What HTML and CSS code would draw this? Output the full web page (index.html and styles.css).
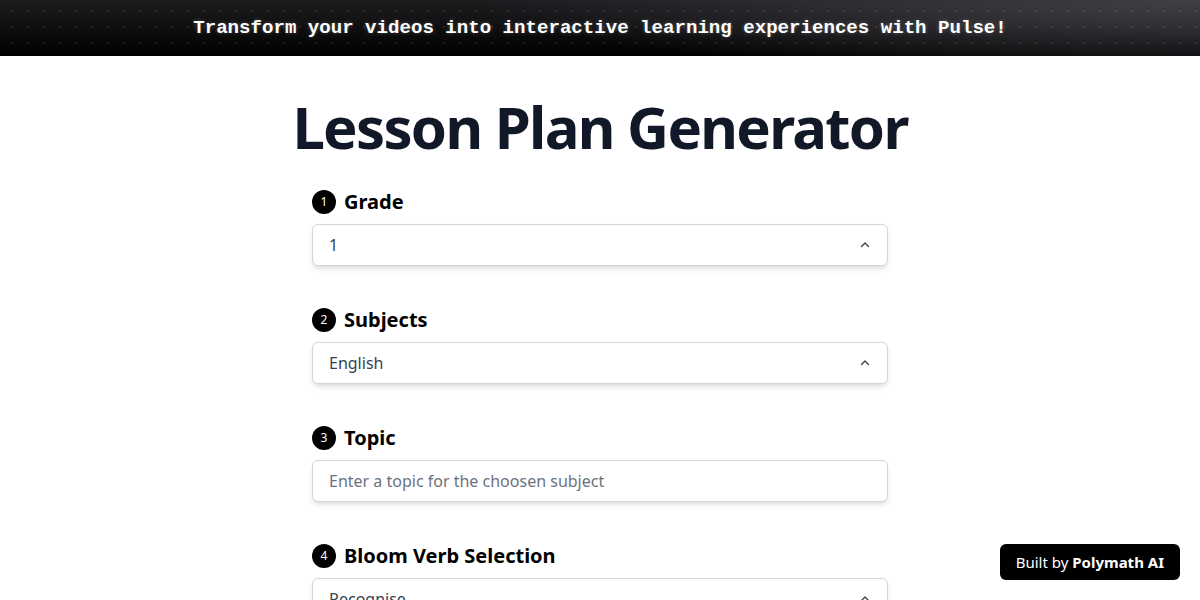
FILE: index.html
```html
<!DOCTYPE html>
<html lang="en">
<head>
    <meta charset="UTF-8">
    <meta name="viewport" content="width=device-width, initial-scale=1.0">
    <title>Lesson Plan Generator</title>
    <link rel="stylesheet" href="styles.css">
</head>
<body>

    <!-- Top banner -->
    <div class="banner">
        <p>Transform your videos into interactive learning experiences with Pulse!</p>
    </div>

    <main class="page">
        <h1 class="title">Lesson Plan Generator</h1>

        <form class="plan-form">
            <!-- Grade -->
            <div class="field">
                <label class="field-label"><span class="step">1</span>Grade</label>
                <div class="select-box">
                    <span>1</span>
                    <svg class="chevron" viewBox="0 0 12 12" width="12" height="12"><path d="M2.5 7.5 6 4l3.5 3.5"/></svg>
                </div>
            </div>

            <!-- Subjects -->
            <div class="field">
                <label class="field-label"><span class="step">2</span>Subjects</label>
                <div class="select-box">
                    <span>English</span>
                    <svg class="chevron" viewBox="0 0 12 12" width="12" height="12"><path d="M2.5 7.5 6 4l3.5 3.5"/></svg>
                </div>
            </div>

            <!-- Topic -->
            <div class="field">
                <label class="field-label" for="topic"><span class="step">3</span>Topic</label>
                <input type="text" id="topic" class="text-box" placeholder="Enter a topic for the choosen subject">
            </div>

            <!-- Bloom verb -->
            <div class="field">
                <label class="field-label"><span class="step">4</span>Bloom Verb Selection</label>
                <div class="select-box">
                    <span>Recognise</span>
                    <svg class="chevron" viewBox="0 0 12 12" width="12" height="12"><path d="M2.5 7.5 6 4l3.5 3.5"/></svg>
                </div>
            </div>
        </form>
    </main>

    <a class="built-by" href="#">Built by <strong>Polymath AI</strong></a>

</body>
</html>
```

FILE: styles.css
```css
/* Base */
body {
    margin: 0;
    background-color: white;
    color: #111827;
    font-family: "Noto Sans", "Open Sans", sans-serif;
}

/* Banner */
.banner {
    height: 56px;
    display: flex;
    align-items: center;
    justify-content: center;
    background-color: #000;
    background-image:
        radial-gradient(circle, rgba(255, 255, 255, 0.09) 1px, transparent 1.3px),
        radial-gradient(ellipse 60% 140% at 100% 0%, #3f3f46 0%, rgba(63, 63, 70, 0) 100%),
        linear-gradient(to bottom, #1d1d20, #000);
    background-size: 16px 16px, 100% 100%, 100% 100%;
    background-position: 4px 3px, 0 0, 0 0;
}

.banner p {
    margin: 0;
    color: white;
    font-family: "Liberation Mono", monospace;
    font-weight: bold;
    font-size: 19.1px;
    text-shadow: 0 0 4px rgba(255, 255, 255, 0.25);
}

/* Page */
.page {
    width: 576px;
    margin: 0 auto;
}

.title {
    margin: 35px -60px 27px;
    text-align: center;
    font-size: 58px;
    line-height: 72px;
    font-weight: bold;
    color: #111827;
    letter-spacing: -1.7px;
}

/* Form fields */
.field {
    margin-bottom: 42px;
}

.field-label {
    display: flex;
    align-items: center;
    gap: 8px;
    height: 24px;
    margin-bottom: 10px;
    font-size: 20px;
    line-height: 22px;
    font-weight: bold;
    color: #000;
}

.step {
    width: 24px;
    height: 24px;
    border-radius: 50%;
    background-color: #000;
    color: white;
    font-size: 12px;
    font-weight: normal;
    display: flex;
    align-items: center;
    justify-content: center;
}

.select-box,
.text-box {
    box-sizing: border-box;
    width: 100%;
    height: 42px;
    padding: 0 16px;
    border: 1px solid #d1d5db;
    border-radius: 6px;
    background-color: white;
    box-shadow: 0 4px 6px -1px rgba(0, 0, 0, 0.1), 0 2px 4px -2px rgba(0, 0, 0, 0.1);
    font-family: inherit;
    font-size: 16px;
    color: #374151;
}

.select-box {
    display: flex;
    align-items: center;
    justify-content: space-between;
}

.text-box::placeholder {
    color: #6b7280;
}

.chevron {
    fill: none;
    stroke: #374151;
    stroke-width: 1.4;
    stroke-linecap: round;
    stroke-linejoin: round;
}

/* Floating badge */
.built-by {
    position: fixed;
    right: 20px;
    bottom: 20px;
    padding: 8px 16px;
    border-radius: 6px;
    background-color: #000;
    color: white;
    font-size: 15px;
    line-height: 20px;
    text-decoration: none;
}
```
